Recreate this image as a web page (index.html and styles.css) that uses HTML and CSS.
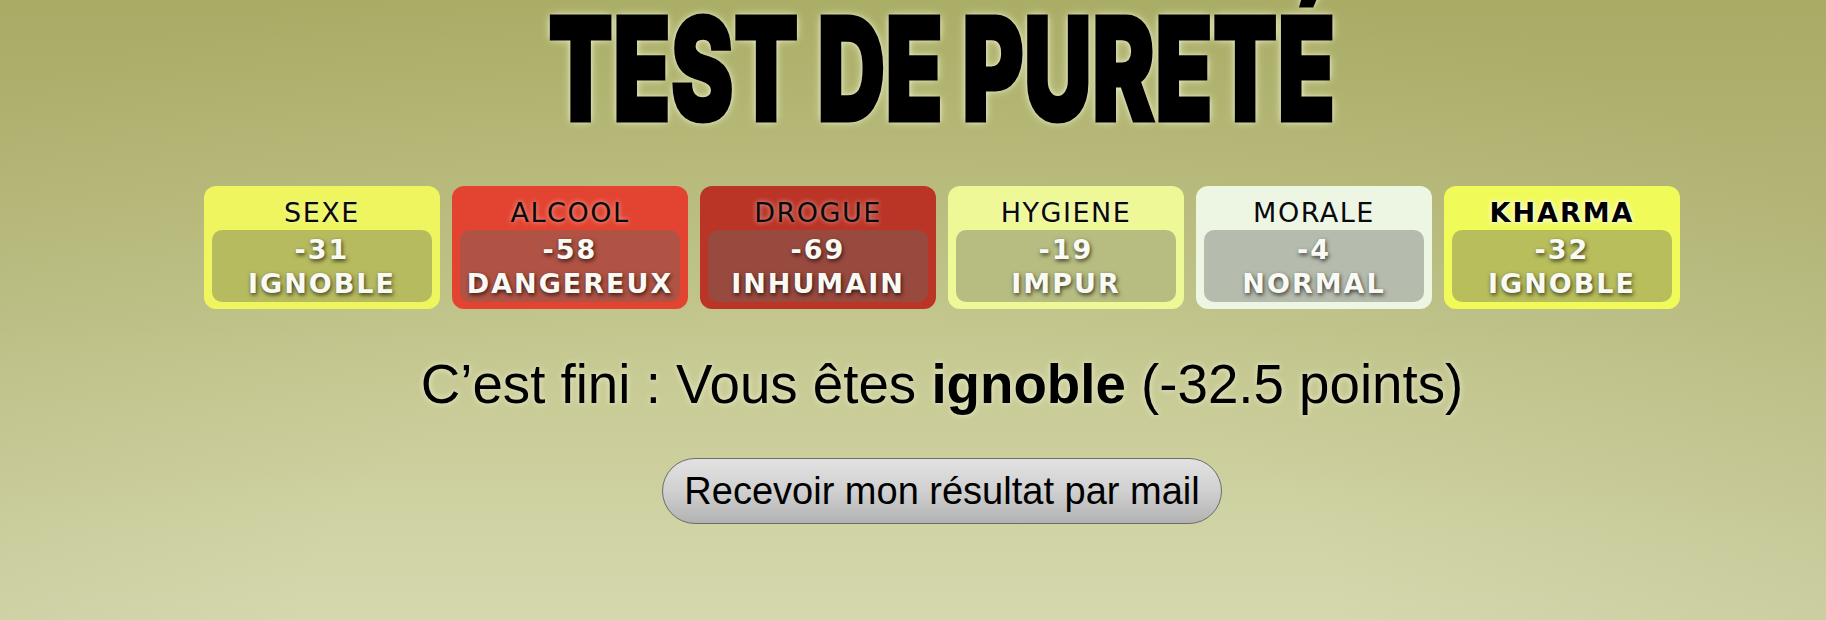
FILE: index.html
```html
<!DOCTYPE html>
<html lang="fr">
<head>
<meta charset="utf-8">
<title>Test de pureté</title>
<link rel="stylesheet" href="styles.css">
</head>
<body>
<main class="page">
  <h1 class="title"><span class="title-text">TEST DE PURETÉ</span></h1>
  <div class="scores">
    <div class="score score-sexe">
      <div class="score-label">SEXE</div>
      <div class="score-result"><div>-31</div><div>IGNOBLE</div></div>
    </div>
    <div class="score score-alcool">
      <div class="score-label">ALCOOL</div>
      <div class="score-result"><div>-58</div><div>DANGEREUX</div></div>
    </div>
    <div class="score score-drogue">
      <div class="score-label">DROGUE</div>
      <div class="score-result"><div>-69</div><div>INHUMAIN</div></div>
    </div>
    <div class="score score-hygiene">
      <div class="score-label">HYGIENE</div>
      <div class="score-result"><div>-19</div><div>IMPUR</div></div>
    </div>
    <div class="score score-morale">
      <div class="score-label">MORALE</div>
      <div class="score-result"><div>-4</div><div>NORMAL</div></div>
    </div>
    <div class="score score-kharma">
      <div class="score-label score-label-strong">KHARMA</div>
      <div class="score-result"><div>-32</div><div>IGNOBLE</div></div>
    </div>
  </div>
  <p class="verdict">C’est fini : Vous êtes <strong>ignoble</strong> (-32.5 points)</p>
  <button class="mail-btn" type="button">Recevoir mon résultat par mail</button>
</main>
</body>
</html>
```

FILE: styles.css
```css
html, body {
  margin: 0;
  height: 100%;
}
body {
  background:
    radial-gradient(ellipse 70% 110% at 45% 100%, rgba(90, 90, 20, 0) 40%, rgba(90, 90, 20, 0.12) 100%),
    linear-gradient(to bottom, #b4b770 0%, #c2c58a 45%, #d5d8ad 100%);
  font-family: "Liberation Sans", Arial, sans-serif;
  overflow: hidden;
}
.page {
  padding-left: 58px;
  display: flex;
  flex-direction: column;
  align-items: center;
}
.title {
  margin: 0;
  height: 135px;
  font-family: "Inter", "DejaVu Sans", sans-serif;
  font-weight: 900;
  font-size: 144px;
  line-height: 137px;
  color: #000;
  white-space: nowrap;
}
.title-text {
  display: inline-block;
  transform: scaleX(0.655);
  -webkit-text-stroke: 3px #000;
  text-shadow: 0 0 12px rgba(245, 248, 215, 0.95), 0 0 5px rgba(245, 248, 215, 0.9);
}
.scores {
  margin-top: 51px;
  display: flex;
  gap: 12px;
}
.score {
  width: 236px;
  box-sizing: border-box;
  padding: 10px 8px 7px;
  border-radius: 12px;
  text-align: center;
  font-family: "DejaVu Sans", Verdana, sans-serif;
}
.score-sexe { background: #eef55e; }
.score-alcool { background: #e34432; }
.score-drogue { background: #bb3527; }
.score-hygiene { background: #eef896; }
.score-morale { background: #ecf6e3; }
.score-kharma { background: #f0fa58; }
.score-label {
  font-size: 27px;
  line-height: 34px;
  letter-spacing: 1.5px;
  color: #0a0a0a;
  text-shadow: 0 0 5px rgba(255, 255, 255, 0.6);
}
.score-label-strong {
  font-weight: bold;
  letter-spacing: 2px;
  color: #000;
  text-shadow: 0 0 3px #fff, 0 0 6px #fff;
}
.score-result {
  padding: 3px 0 1px;
  border-radius: 10px;
  background: rgba(105, 105, 97, 0.41);
  font-size: 27px;
  line-height: 34px;
  font-weight: bold;
  letter-spacing: 2px;
  color: #fafaf4;
  text-shadow: 1px 2px 4px rgba(0, 0, 0, 0.7);
}
.verdict {
  margin: 44px 0 0;
  font-size: 54.7px;
  line-height: 62px;
  color: #000;
  white-space: nowrap;
  text-shadow: 0 0 6px rgba(255, 255, 235, 0.7);
}
.verdict strong {
  font-weight: bold;
}
.mail-btn {
  margin-top: 43px;
  height: 66px;
  box-sizing: border-box;
  padding: 0 21px;
  border: 1.5px solid #6c6c6c;
  border-radius: 34px;
  background: linear-gradient(#e2e2e2, #d0d0d0 50%, #b2b2b2);
  font-family: "Liberation Sans", Arial, sans-serif;
  font-size: 38px;
  color: #000;
  display: inline-flex;
  align-items: center;
}
```
